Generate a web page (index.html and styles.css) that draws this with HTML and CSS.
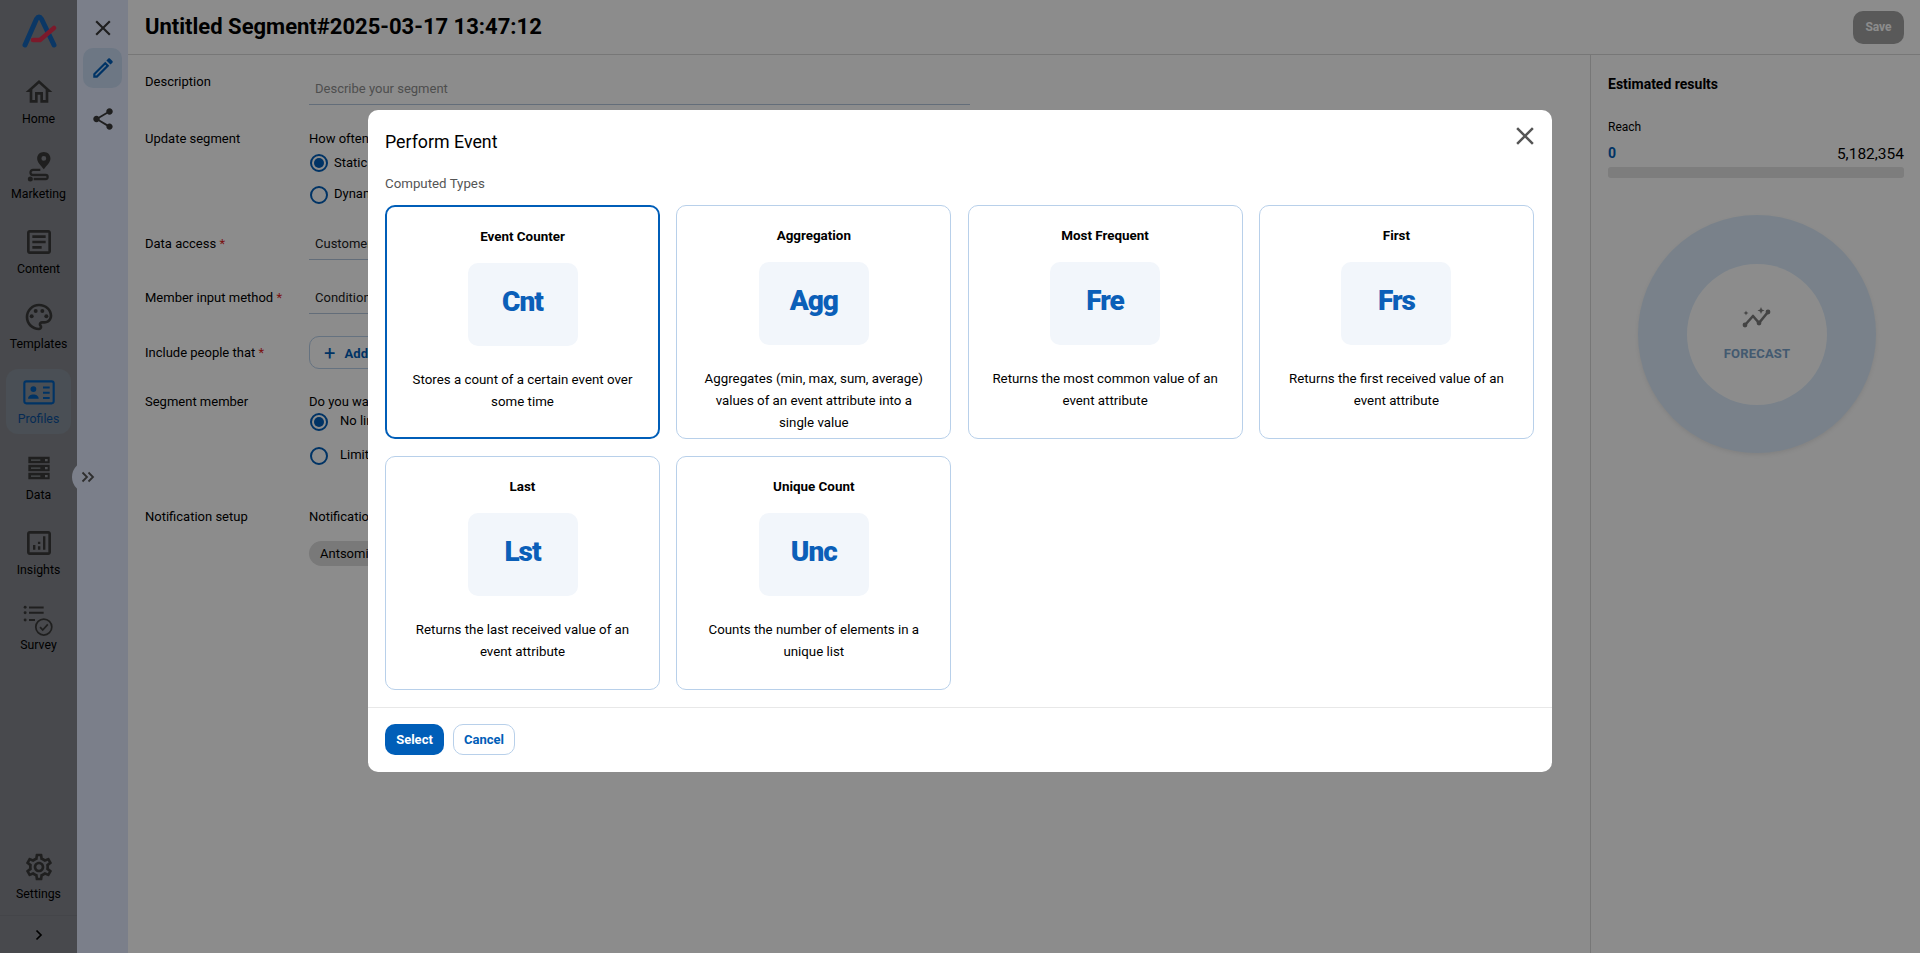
FILE: index.html
```html
<!DOCTYPE html>
<html>
<head>
	<meta charset="utf-8">
	<title>Untitled Segment</title>
	<link rel="stylesheet" href="styles.css">
</head>
<body>
	<div class="app">
		<!-- main navigation -->
		<nav class="sidebar">
			<div class="logo">
				<svg width="36" height="36" viewBox="0 0 36 36">
					<path d="M4 31L15.500 5Q18 1 20.500 5L33 31" fill="none" stroke="#1565b8" stroke-width="5" stroke-linecap="round" stroke-linejoin="round"/>
					<path d="M12 26H19L33 14" fill="none" stroke="#e0304f" stroke-width="4.500" stroke-linecap="round" stroke-linejoin="round"/>
				</svg>
			</div>
			<a class="nav-item">
				<svg class="nav-icon" viewBox="0 0 24 24"><path d="M12 5.690l5 4.500V18h-2v-6H9v6H7v-7.810l5-4.500M12 3L2 12h3v8h6v-6h2v6h6v-8h3L12 3z"/></svg>
				<span>Home</span>
			</a>
			<a class="nav-item">
				<svg class="nav-icon" viewBox="0 0 24 24">
					<path d="M15.600 0.800c-2.900 0-5 2.100-5 4.800 0 2.800 2.900 5.500 5 8 2.100-2.500 5-5.200 5-8 0-2.700-2.100-4.800-5-4.800zm0 6.600a1.800 1.800 0 1 1 0-3.600 1.800 1.800 0 0 1 0 3.600z"/>
					<path d="M13 14.200H7.500a1.900 1.900 0 0 0 0 3.800H17a1.500 1.500 0 0 1 0 3H8" fill="none" stroke="currentColor" stroke-width="1.700"/>
					<circle cx="5.500" cy="21" r="1.900"/>
				</svg>
				<span>Marketing</span>
			</a>
			<a class="nav-item">
				<svg class="nav-icon" viewBox="0 0 24 24"><path d="M19 5v14H5V5h14m0-2H5c-1.100 0-2 .9-2 2v14c0 1.100.9 2 2 2h14c1.100 0 2-.9 2-2V5c0-1.100-.9-2-2-2z"/><path d="M14 17H7v-2h7v2zm3-4H7v-2h10v2zm0-4H7V7h10v2z"/></svg>
				<span>Content</span>
			</a>
			<a class="nav-item">
				<svg class="nav-icon" viewBox="0 0 24 24">
					<path d="M12 22C6.490 22 2 17.510 2 12S6.490 2 12 2s10 4.040 10 9c0 3.310-2.690 6-6 6h-1.770c-.28 0-.5.22-.5.5 0 .12.05.23.13.33.41.47.64 1.060.64 1.670 0 1.380-1.120 2.500-2.500 2.500zm0-18c-4.410 0-8 3.590-8 8s3.590 8 8 8c.28 0 .5-.22.5-.5 0-.16-.08-.28-.14-.35-.41-.46-.63-1.050-.63-1.650 0-1.380 1.120-2.500 2.500-2.500H16c2.210 0 4-1.790 4-4 0-3.860-3.590-7-8-7z"/>
					<circle cx="6.500" cy="11.500" r="1.500"/><circle cx="9.500" cy="7.500" r="1.500"/><circle cx="14.500" cy="7.500" r="1.500"/><circle cx="17.500" cy="11.500" r="1.500"/>
				</svg>
				<span>Templates</span>
			</a>
			<a class="nav-item active">
				<svg class="nav-icon" viewBox="0 0 24 24">
					<rect x="1" y="4" width="22" height="16.500" rx="1.500" fill="none" stroke="currentColor" stroke-width="1.600"/>
					<circle cx="7.800" cy="9.800" r="2.200"/>
					<path d="M3.800 17c0-2 2-3.100 4-3.100s4 1.100 4 3.100zM15 7.800h5v1.500h-5zM15 11.800h5v1.500h-5zM15 15.800h5v1.500h-5z"/>
				</svg>
				<span>Profiles</span>
			</a>
			<a class="nav-item">
				<svg class="nav-icon" viewBox="0 0 24 24">
					<path d="M4 3.600h16v4.900H4zM4 9.600h16v4.900H4zM4 15.600h16v4.900H4z"/>
					<path d="M6 5.700h7v.8H6zM6 11.700h7v.8H6zM6 17.700h7v.8H6zM16.500 5.200h2v1.700h-2zM16.500 11.200h2v1.700h-2zM16.500 17.200h2v1.700h-2z" fill="#8a8d92"/>
				</svg>
				<span>Data</span>
			</a>
			<a class="nav-item">
				<svg class="nav-icon" viewBox="0 0 24 24"><path d="M19 5v14H5V5h14m0-2H5c-1.100 0-2 .9-2 2v14c0 1.100.9 2 2 2h14c1.100 0 2-.9 2-2V5c0-1.100-.9-2-2-2z"/><path d="M7.500 13.500h1.800V17H7.500zM11.200 11h1.800v1.800h-1.800zM11.200 14.500h1.800V17h-1.800zM15 7h1.800v10H15z"/></svg>
				<span>Insights</span>
			</a>
			<a class="nav-item">
				<svg class="nav-icon survey" viewBox="0 0 24 24">
					<path d="M4.500 3.300h11v1.500h-11zM4.500 7.300h11v1.500h-11zM4.500 12.800h4.500v1.500H4.500z"/>
					<circle cx="1.600" cy="4" r="1.100"/><circle cx="1.600" cy="8" r="1.100"/><circle cx="1.600" cy="13.500" r="1.100"/>
					<circle cx="15.600" cy="18.800" r="6" fill="none" stroke="currentColor" stroke-width="1.300"/>
					<path d="M12.800 18.800l2 2.200 3.800-4.200" fill="none" stroke="currentColor" stroke-width="1.300"/>
				</svg>
				<span>Survey</span>
			</a>
			<div class="sidebar-bottom">
				<a class="nav-item">
					<svg class="nav-icon" viewBox="0 0 24 24"><path d="M19.430 12.980c.04-.32.07-.64.07-.98 0-.34-.03-.66-.07-.98l2.110-1.650c.19-.15.24-.42.12-.64l-2-3.460c-.09-.16-.26-.25-.44-.25-.06 0-.12.01-.17.03l-2.490 1c-.52-.4-1.080-.73-1.690-.98l-.38-2.650C14.460 2.180 14.250 2 14 2h-4c-.25 0-.46.18-.49.42l-.38 2.650c-.61.25-1.170.59-1.690.98l-2.490-1c-.06-.02-.12-.03-.18-.03-.17 0-.34.09-.43.25l-2 3.460c-.13.22-.07.49.12.64l2.110 1.650c-.04.32-.07.65-.07.98 0 .33.03.66.07.98l-2.110 1.650c-.19.15-.24.42-.12.64l2 3.460c.09.16.26.25.44.25.06 0 .12-.01.17-.03l2.490-1c.52.4 1.080.73 1.690.98l.38 2.650c.03.24.24.42.49.42h4c.25 0 .46-.18.49-.42l.38-2.650c.61-.25 1.170-.59 1.690-.98l2.490 1c.06.02.12.03.18.03.17 0 .34-.09.43-.25l2-3.460c.12-.22.07-.49-.12-.64l-2.110-1.650zm-1.980-1.710c.04.31.05.52.05.73 0 .21-.02.43-.05.73l-.14 1.130.89.7 1.080.84-.7 1.210-1.270-.51-1.040-.42-.9.68c-.43.32-.84.56-1.250.73l-1.060.43-.16 1.130-.2 1.350h-1.400l-.19-1.350-.16-1.130-1.060-.43c-.43-.18-.83-.41-1.230-.71l-.91-.7-1.060.43-1.270.51-.7-1.210 1.080-.84.89-.7-.14-1.130c-.03-.31-.05-.54-.05-.74s.02-.43.05-.73l.14-1.130-.89-.7-1.080-.84.7-1.210 1.270.51 1.040.42.9-.68c.43-.32.84-.56 1.250-.73l1.060-.43.16-1.130.2-1.350h1.390l.19 1.350.16 1.130 1.060.43c.43.18.83.41 1.230.71l.91.7 1.060-.43 1.270-.51.7 1.210-1.070.85-.89.7.14 1.130zM12 8c-2.210 0-4 1.790-4 4s1.790 4 4 4 4-1.790 4-4-1.790-4-4-4zm0 6c-1.100 0-2-.9-2-2s.9-2 2-2 2 .9 2 2-.9 2-2 2z"/></svg>
					<span>Settings</span>
				</a>
				<div class="expand">
					<svg width="12" height="12" viewBox="0 0 12 12"><path d="M3.500 1.500L8 6l-4.500 4.500" fill="none" stroke="#000" stroke-width="1.700"/></svg>
				</div>
			</div>
		</nav>

		<!-- second column -->
		<div class="tools">
			<button class="tool-btn">
				<svg width="26" height="26" viewBox="0 0 24 24"><path d="M19 6.410L17.590 5 12 10.590 6.410 5 5 6.410 10.590 12 5 17.590 6.410 19 12 13.410 17.590 19 19 17.590 13.410 12z"/></svg>
			</button>
			<button class="tool-btn selected">
				<svg width="26" height="26" viewBox="0 0 24 24"><path d="M14.060 9.020l.92.92L5.920 19H5v-.92l9.060-9.060M17.660 3c-.25 0-.51.1-.7.29l-1.830 1.830 3.750 3.750 1.830-1.830c.39-.39.39-1.020 0-1.410l-2.340-2.340c-.2-.2-.45-.29-.71-.29zm-3.600 3.190L3 17.250V21h3.750L17.810 9.940l-3.750-3.750z"/></svg>
			</button>
			<button class="tool-btn share">
				<svg width="26" height="26" viewBox="0 0 24 24"><path d="M18 16.080c-.76 0-1.440.3-1.960.77L8.910 12.700c.05-.23.09-.46.09-.7s-.04-.47-.09-.7l7.050-4.110c.54.5 1.250.81 2.040.81 1.660 0 3-1.340 3-3s-1.340-3-3-3-3 1.340-3 3c0 .24.04.47.09.7L8.040 9.810C7.500 9.310 6.790 9 6 9c-1.660 0-3 1.340-3 3s1.340 3 3 3c.79 0 1.500-.31 2.040-.81l7.120 4.160c-.05.21-.08.43-.08.65 0 1.610 1.310 2.920 2.920 2.920 1.610 0 2.920-1.310 2.920-2.920s-1.310-2.920-2.920-2.920z"/></svg>
			</button>
		</div>
		<div class="collapse-btn">
			<svg width="14" height="14" viewBox="0 0 14 14"><path d="M1.500 2.500L6 7l-4.500 4.500M7.500 2.500L12 7l-4.500 4.500" fill="none" stroke="#555" stroke-width="1.800"/></svg>
		</div>

		<!-- page -->
		<main class="page">
			<header class="page-head">
				<h1>Untitled Segment#2025-03-17 13:47:12</h1>
				<button class="save-btn">Save</button>
			</header>
			<div class="page-body">
				<section class="form">
					<div class="row row-desc">
						<label>Description</label>
						<div class="field placeholder">Describe your segment</div>
					</div>
					<div class="row row-update">
						<label>Update segment</label>
						<div>
							<p class="question">How often</p>
							<div class="radio checked first">Static</div>
							<div class="radio">Dynamic</div>
						</div>
					</div>
					<div class="row row-access">
						<label>Data access <em>*</em></label>
						<div class="field">Customer</div>
					</div>
					<div class="row row-method">
						<label>Member input method <em>*</em></label>
						<div class="field">Conditions</div>
					</div>
					<div class="row row-include">
						<label>Include people that <em>*</em></label>
						<button class="add-btn"><span class="plus">+</span> Add</button>
					</div>
					<div class="row row-member">
						<label>Segment member</label>
						<div>
							<p class="question short">Do you want</p>
							<div class="radio checked tight">No limit</div>
							<div class="radio tight">Limit</div>
						</div>
					</div>
					<div class="row row-notify">
						<label>Notification setup</label>
						<div>
							<p class="question">Notification</p>
							<span class="chip">Antsomi</span>
						</div>
					</div>
				</section>
				<aside class="results">
					<h2>Estimated results</h2>
					<div class="reach-label">Reach</div>
					<div class="reach-nums"><b>0</b><span>5,182,354</span></div>
					<div class="reach-bar"></div>
					<div class="donut">
						<div class="donut-hole">
							<svg width="30" height="22" viewBox="0 0 30 22">
								<path d="M3 18L11 9l6 7 9-11" fill="none" stroke="#7c7c7c" stroke-width="2.600" stroke-linecap="round" stroke-linejoin="round"/>
								<circle cx="3" cy="18" r="2.400" fill="#7c7c7c"/><circle cx="17" cy="16" r="2.400" fill="#7c7c7c"/><circle cx="26" cy="5" r="2.400" fill="#7c7c7c"/>
								<path d="M19 0l1 2.500 2.500 1-2.500 1-1 2.500-1-2.500-2.500-1 2.500-1zM4 3.500l.7 1.800 1.800.7-1.800.7L4 8.500l-.7-1.800-1.800-.7 1.800-.7z" fill="#7c7c7c"/>
							</svg>
							<span>FORECAST</span>
						</div>
					</div>
				</aside>
			</div>
		</main>
	</div>

	<div class="overlay">
		<div class="modal">
			<div class="modal-head">
				<h3>Perform Event</h3>
				<svg class="modal-close" width="30" height="30" viewBox="0 0 24 24"><path d="M19 6.410L17.590 5 12 10.590 6.410 5 5 6.410 10.590 12 5 17.590 6.410 19 12 13.410 17.590 19 19 17.590 13.410 12z"/></svg>
			</div>
			<div class="modal-sub">Computed Types</div>
			<div class="cards">
				<div class="card selected">
					<div class="card-title">Event Counter</div>
					<div class="card-badge">Cnt</div>
					<p>Stores a count of a certain event over some time</p>
				</div>
				<div class="card">
					<div class="card-title">Aggregation</div>
					<div class="card-badge">Agg</div>
					<p>Aggregates (min, max, sum, average) values of an event attribute into a single value</p>
				</div>
				<div class="card">
					<div class="card-title">Most Frequent</div>
					<div class="card-badge">Fre</div>
					<p>Returns the most common value of an event attribute</p>
				</div>
				<div class="card">
					<div class="card-title">First</div>
					<div class="card-badge">Frs</div>
					<p>Returns the first received value of an event attribute</p>
				</div>
				<div class="card">
					<div class="card-title">Last</div>
					<div class="card-badge">Lst</div>
					<p>Returns the last received value of an event attribute</p>
				</div>
				<div class="card">
					<div class="card-title">Unique Count</div>
					<div class="card-badge">Unc</div>
					<p>Counts the number of elements in a unique list</p>
				</div>
			</div>
			<div class="modal-foot">
				<button class="btn-primary">Select</button>
				<button class="btn-outline">Cancel</button>
			</div>
		</div>
	</div>
</body>
</html>
```

FILE: styles.css
```css
*, *:before, *:after {
	box-sizing: border-box;
}
html, body {
	margin: 0;
	height: 953px;
	overflow: hidden;
	font-family: Roboto, "Liberation Sans", sans-serif;
	font-size: 12px;
	color: #000;
	background: #fff;
}
button {
	font-family: inherit;
	cursor: pointer;
}
p, h1, h2, h3 {
	margin: 0;
}
.app {
	display: flex;
	height: 953px;
}

/* sidebar */
.sidebar {
	width: 77px;
	flex: none;
	display: flex;
	flex-direction: column;
	align-items: center;
	background: #84868c;
}
.logo {
	height: 63px;
	padding-top: 14px;
}
.nav-item {
	width: 65px;
	height: 75.2px;
	flex: none;
	display: flex;
	flex-direction: column;
	align-items: center;
	justify-content: center;
	gap: 4px;
	border-radius: 12px;
	font-size: 12.3px;
	color: #000;
}
.nav-item.active {
	height: 65.2px;
	margin: 5px 0;
	background: #87909b;
	color: #0a4f9a;
}
.nav-icon {
	width: 32px;
	height: 32px;
	fill: #3a3a3a;
	color: #3a3a3a;
	overflow: visible;
}
.nav-item.active .nav-icon {
	fill: #005eb8;
	color: #005eb8;
}
.sidebar-bottom {
	margin-top: auto;
	width: 100%;
	display: flex;
	flex-direction: column;
	align-items: center;
}
.expand {
	width: 100%;
	height: 38px;
	margin-top: 1px;
	border-top: 1px solid #7d7f85;
	display: flex;
	align-items: center;
	justify-content: center;
}

/* tools column */
.tools {
	width: 51px;
	flex: none;
	display: flex;
	flex-direction: column;
	align-items: center;
	padding-top: 8px;
	background: #e0e7fb;
}
.tool-btn {
	width: 39px;
	height: 40px;
	padding: 0;
	border: none;
	border-radius: 10px;
	background: transparent;
	display: flex;
	align-items: center;
	justify-content: center;
	fill: #3a3a3a;
}
.tool-btn.selected {
	background: #c6d9f1;
	fill: #005eb8;
}
.tool-btn.share {
	margin-top: 11px;
}
.collapse-btn {
	position: absolute;
	left: 72px;
	top: 461px;
	width: 32px;
	height: 32px;
	border-radius: 50%;
	background: #e0e7fb;
	display: flex;
	align-items: center;
	justify-content: center;
}

/* page */
.page {
	flex: 1;
	display: flex;
	flex-direction: column;
	min-width: 0;
}
.page-head {
	height: 55px;
	flex: none;
	display: flex;
	align-items: center;
	justify-content: space-between;
	padding: 0 16px 0 17px;
	border-bottom: 1px solid #d9d9d9;
}
.page-head h1 {
	font-size: 22px;
	font-weight: 700;
	margin-top: -2px;
}
.save-btn {
	width: 51px;
	height: 33px;
	border: none;
	border-radius: 10px;
	background: #a3a3a3;
	color: #fff;
	font-size: 12px;
	font-weight: 700;
}
.page-body {
	flex: 1;
	display: flex;
}
.form {
	flex: 1;
	padding-left: 17px;
}
.row {
	display: flex;
	font-size: 13px;
}
.row label {
	width: 164px;
	flex: none;
}
.row em {
	color: #e01e1e;
	font-style: normal;
}
.field {
	width: 661px;
	height: 24px;
	padding-left: 6px;
	border-bottom: 1px solid #b4c7dd;
	margin-top: 7px;
	color: #222;
}
.placeholder {
	color: #8f8f8f;
}
.row-desc {
	padding-top: 19px;
}
.row-update {
	padding-top: 26px;
}
.row-access {
	padding-top: 25px;
}
.row-access .field, .row-method .field {
	margin-top: 0;
}
.row-method {
	padding-top: 30px;
}
.row-include {
	padding-top: 22px;
	align-items: flex-start;
}
.row-include label {
	padding-top: 9px;
}
.add-btn {
	height: 33px;
	width: 150px;
	padding: 0 14px;
	text-align: left;
	border: 1px solid #b8d0ea;
	border-radius: 10px;
	background: #fff;
	color: #005eb8;
	font-size: 13px;
	font-weight: 700;
}
.plus {
	font-size: 20px;
	font-weight: 400;
	margin-right: 6px;
	vertical-align: -2px;
}
.row-member {
	padding-top: 25px;
}
.row-notify {
	padding-top: 37px;
}
.question {
	height: 16px;
	white-space: nowrap;
}
.question.short {
	height: 10px;
}
.radio {
	position: relative;
	height: 34px;
	padding: 9px 0 0 25px;
	white-space: nowrap;
}
.radio.first {
	height: 30px;
	padding-top: 8px;
}
.radio.tight {
	padding-left: 31px;
}
.radio:before {
	content: "";
	position: absolute;
	left: 1px;
	top: 9px;
	width: 18px;
	height: 18px;
	border: 2px solid #005eb8;
	border-radius: 50%;
}
.radio.first:before {
	top: 7px;
}
.radio.checked:after {
	content: "";
	position: absolute;
	left: 5px;
	top: 13px;
	width: 10px;
	height: 10px;
	background: #005eb8;
	border-radius: 50%;
}
.radio.first:after {
	top: 11px;
}
.chip {
	display: inline-block;
	height: 25px;
	margin-top: 16px;
	padding: 5px 11px;
	border-radius: 13px;
	background: #dcdcdc;
	white-space: nowrap;
}

/* right panel */
.results {
	width: 330px;
	flex: none;
	padding: 21px 16px 0 17px;
	border-left: 1px solid #d9d9d9;
	margin-left: auto;
}
.results h2 {
	font-size: 14px;
	font-weight: 700;
}
.reach-label {
	margin-top: 28px;
	font-size: 12px;
}
.reach-nums {
	margin-top: 11px;
	display: flex;
	justify-content: space-between;
	font-size: 15.5px;
}
.reach-nums b {
	color: #005eb8;
	font-weight: 700;
	font-size: 14px;
}
.reach-bar {
	height: 11px;
	margin-top: 4px;
	border-radius: 3px;
	background: #e3e3e3;
}
.donut {
	width: 238px;
	height: 238px;
	margin: 37px 0 0 30px;
	border-radius: 50%;
	background: #dcecfc;
	display: flex;
	align-items: center;
	justify-content: center;
	box-shadow: 0 2px 4px rgba(0, 0, 0, .08);
}
.donut-hole {
	width: 140px;
	height: 141px;
	border-radius: 50%;
	background: #fff;
	display: flex;
	flex-direction: column;
	align-items: center;
	justify-content: center;
	gap: 17px;
}
.donut-hole span {
	color: #7ba4cc;
	font-size: 13px;
	font-weight: 700;
	letter-spacing: .2px;
}

/* modal */
.overlay {
	position: fixed;
	left: 0;
	top: 0;
	width: 100%;
	height: 100%;
	background: rgba(0, 0, 0, .45);
	display: flex;
	justify-content: center;
	padding-top: 110px;
}
.modal {
	width: 1184px;
	height: 662px;
	background: #fff;
	border-radius: 10px;
	display: flex;
	flex-direction: column;
}
.modal-head {
	position: relative;
	height: 57px;
	padding: 21px 17px 0;
}
.modal-head h3 {
	font-size: 17.8px;
	font-weight: 400;
}
.modal-close {
	position: absolute;
	right: 12px;
	top: 11px;
	fill: #555;
}
.modal-sub {
	height: 38px;
	padding: 9px 17px 0;
	font-size: 13.3px;
	color: #555;
}
.cards {
	display: grid;
	grid-template-columns: repeat(4, 275px);
	grid-auto-rows: 234px;
	gap: 17px 16.3px;
	padding: 0 17px;
	height: 502px;
}
.card {
	border: 1px solid #b8d0ea;
	border-radius: 10px;
	padding: 22px 10px 0;
	text-align: center;
}
.card.selected {
	border: 2px solid #005eb8;
}
.card-title {
	font-size: 13.4px;
	font-weight: 700;
	line-height: 15px;
}
.card-badge {
	width: 110px;
	height: 83px;
	margin: 19px auto 23px;
	border-radius: 10px;
	background: #f2f6fb;
	color: #0b5fb8;
	font-size: 28px;
	font-weight: 900;
	letter-spacing: -1px;
	line-height: 78px;
}
.card p {
	font-size: 13.3px;
	line-height: 22px;
	padding: 0 12px;
}
.modal-foot {
	height: 65px;
	padding: 16px 17px 0;
	border-top: 1px solid #e8e8e8;
	display: flex;
	align-items: flex-start;
	gap: 9px;
}
.btn-primary, .btn-outline {
	height: 31px;
	border-radius: 10px;
	font-size: 13px;
	font-weight: 700;
	padding: 0;
}
.btn-primary {
	width: 59px;
	border: none;
	background: #005eb8;
	color: #fff;
}
.btn-outline {
	width: 62px;
	border: 1px solid #b8d0ea;
	background: #fff;
	color: #005eb8;
}
```
